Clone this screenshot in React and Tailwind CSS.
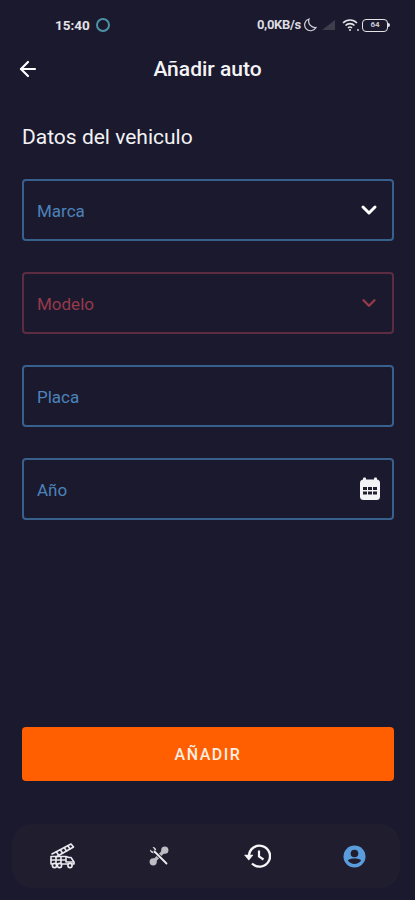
import React from "react";
import { ArrowLeft, ChevronDown } from "lucide-react";

function Field({ label, error, icon }) {
  return (
    <div className={`h-[62px] flex items-center justify-between pl-[13px] pr-[13px] rounded-[4px] border-2 ${error ? "border-[#5e2c42]" : "border-[#38608c]"}`}>
      <span className={`text-[17px] pt-[3px] ${error ? "text-[#96394a]" : "text-[#4c83ba]"}`}>{label}</span>
      {icon}
    </div>
  );
}

function Calendar() {
  return (
    <svg width="22" height="24" viewBox="0 0 22 24" className="mr-[-2px] mt-[-1px]">
      <rect x="4" y="0.5" width="3" height="5" rx="1" fill="#f4f4f6" />
      <rect x="15" y="0.5" width="3" height="5" rx="1" fill="#f4f4f6" />
      <rect x="1" y="2.5" width="20" height="20.5" rx="3.5" fill="#f4f4f6" />
      <g fill="#23212f">
        <rect x="4" y="10" width="4" height="3" />
        <rect x="9" y="10" width="4" height="3" />
        <rect x="14" y="10" width="4" height="3" />
        <rect x="4" y="14.5" width="4" height="3" />
        <rect x="9" y="14.5" width="4" height="3" />
        <rect x="14" y="14.5" width="4" height="3" />
      </g>
    </svg>
  );
}

function Crane() {
  return (
    <svg width="28" height="26" viewBox="0 0 28 26" fill="none" stroke="#eceaf0" strokeWidth="1.6" strokeLinejoin="round" strokeLinecap="round">
      <path d="M4 11 L23 1 L25.5 4 L8 14" />
      <path d="M8.5 9 L10.5 12 M12.5 7 L14.5 10 M16.5 5 L18.5 8 M20 3 L22 6" />
      <path d="M3 21 V13.5 H18 L21 14.5 H23 L26 19 V21 Z" />
      <path d="M3 17 H17 M8 14 V21 M13 14 V21 M18 14.5 V19 H25" />
      <circle cx="6.5" cy="22.5" r="2.1" fill="#1f1d2e" />
      <circle cx="11.5" cy="22.5" r="2.1" fill="#1f1d2e" />
      <circle cx="22" cy="22.5" r="2.1" fill="#1f1d2e" />
    </svg>
  );
}

function Tools() {
  return (
    <svg width="22" height="22" viewBox="0 0 22 22" fill="none" strokeLinecap="round">
      <path d="M7 15 L15 7" stroke="#b8b6be" strokeWidth="3.4" />
      <circle cx="16.8" cy="5.2" r="3.6" fill="#bebcc4" />
      <circle cx="5.2" cy="16.8" r="3.6" fill="#bebcc4" />
      <path d="M2 4.5 A3.4 3.4 0 0 0 6.5 8 L8 6.5 A3.4 3.4 0 0 0 4.5 2 L6.5 4.5 L4.5 6.5 Z" fill="#dddbe1" />
      <path d="M6.5 6.5 L18.5 18.5" stroke="#1f1d2e" strokeWidth="3.2" />
      <path d="M6.5 6.5 L18.5 18.5" stroke="#eeedf1" strokeWidth="1.8" />
    </svg>
  );
}

function History() {
  return (
    <svg width="28" height="26" viewBox="0 0 28 26" fill="none" stroke="#f6f6f8" strokeWidth="2.4">
      <path d="M6 13 A10.5 10.5 0 1 1 9 20.5" />
      <path d="M1.5 12 H10 L5.8 17.2 Z" fill="#f6f6f8" strokeWidth="0.5" strokeLinejoin="round" />
      <path d="M16 7.5 V13.5 L20.5 16.5" strokeWidth="2.2" />
    </svg>
  );
}

function Profile() {
  return (
    <svg width="23" height="23" viewBox="0 0 23 23">
      <circle cx="11.5" cy="11.5" r="11" fill="#5b9ddc" />
      <circle cx="11.5" cy="8.5" r="3.8" fill="#1f1d2e" />
      <path d="M4.8 15.3 C7 12.8 16 12.8 18.2 15.3 C16.6 18 14 19 11.5 19 C9 19 6.4 18 4.8 15.3 Z" fill="#1f1d2e" />
    </svg>
  );
}

export default function App() {
  return (
    <div className="w-[415px] h-[900px] bg-[#1b192e] text-white flex flex-col overflow-hidden font-['Roboto',sans-serif]">
      <div className="h-[50px] pt-[16px] pl-[55px] pr-[25px] flex items-start justify-between">
        <div className="flex items-center h-[18px] gap-[6px]">
          <span className="text-[13.5px] font-bold text-[#e4e4e8]">15:40</span>
          <span className="w-[14px] h-[14px] rounded-full border-2 border-[#4c93a8]" />
        </div>
        <div className="flex items-center h-[18px]">
          <span className="text-[13px] font-bold text-[#dcdce0] tracking-[-0.3px]">0,0KB/s</span>
          <svg width="14" height="14" viewBox="0 0 14 14" fill="none" stroke="#d2d2d8" strokeWidth="1.2" className="ml-[2px]">
            <path d="M6 1 A6 6 0 1 0 13 9.5 A6.5 6.5 0 0 1 6 1 Z" />
          </svg>
          <svg width="15" height="12" viewBox="0 0 15 12" className="ml-[4px]">
            <path d="M1 11 L14 1 V11 Z" fill="#3e3d4c" />
          </svg>
          <svg width="18" height="14" viewBox="0 0 18 14" fill="none" stroke="#e4e4e8" strokeWidth="1.6" className="ml-[6px]">
            <path d="M1 5 C5 1 11 1 15 5 M3.5 7.5 C6 5 10 5 12.5 7.5 M6 10 C7.2 8.8 8.8 8.8 10 10" />
            <circle cx="8" cy="12" r="1" fill="#e4e4e8" stroke="none" />
            <circle cx="16" cy="12" r="0.9" fill="#e4e4e8" stroke="none" />
          </svg>
          <div className="ml-[2px] w-[26px] h-[13px] rounded-[4px] border-[1.5px] border-[#e4e4e8] flex items-center justify-center">
            <span className="text-[8px] leading-none font-bold text-[#c8c8d0]">64</span>
          </div>
          <span className="w-[2px] h-[4px] bg-[#e4e4e8] rounded-r-sm" />
        </div>
      </div>

      <div className="h-[40px] relative flex items-center justify-center">
        <ArrowLeft size={24} strokeWidth={2.2} className="absolute left-[16px] top-[7px] text-white" />
        <span className="text-[21px] font-medium text-[#f4f4f6]">Añadir auto</span>
      </div>

      <div className="pl-[22px] mt-[34px] text-[21px] leading-[26px] text-[#f2f2f4]">Datos del vehiculo</div>

      <div className="pl-[22px] pr-[21px] mt-[29px] flex flex-col gap-[31px]">
        <Field label="Marca" icon={<ChevronDown size={24} strokeWidth={3} className="text-white mr-[-2px]" />} />
        <Field label="Modelo" error icon={<ChevronDown size={22} strokeWidth={2.6} className="text-[#96394a] mr-[-1px]" />} />
        <Field label="Placa" />
        <Field label="Año" icon={<Calendar />} />
      </div>

      <div className="pl-[22px] pr-[21px] mt-[207px]">
        <button className="w-full h-[54px] pt-[1px] rounded-[4px] bg-[#ff5f00] text-[16px] font-medium tracking-[1.5px] text-[#fdeee4]">AÑADIR</button>
      </div>

      <div className="ml-[12px] mr-[15px] mt-[43px] h-[64px] rounded-[20px] bg-[#1f1d2e] flex items-center justify-between pl-[36px] pr-[34px]">
        <Crane />
        <Tools />
        <History />
        <Profile />
      </div>
    </div>
  );
}
